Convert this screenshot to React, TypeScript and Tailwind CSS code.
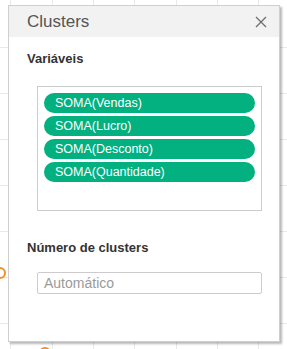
import React from "react";

const pills = ["SOMA(Vendas)", "SOMA(Lucro)", "SOMA(Desconto)", "SOMA(Quantidade)"];

function Background() {
  const hs = [47, 93, 139, 185, 231, 277, 323];
  const vs = [10, 52, 93, 134, 176, 217, 258];
  return (
    <svg className="absolute inset-0" width="287" height="349" viewBox="0 0 287 349">
      {hs.map((y) => (
        <line key={"h" + y} x1="0" x2="287" y1={y + 0.5} y2={y + 0.5} stroke="#e9e9e9" strokeWidth="1" />
      ))}
      {vs.map((x) => (
        <line key={"v" + x} y1="0" y2="349" x1={x + 0.5} x2={x + 0.5} stroke="#e9e9e9" strokeWidth="1" />
      ))}
      <circle cx="0" cy="273" r="5" fill="none" stroke="#f28e2b" strokeWidth="2" />
      <circle cx="45" cy="353" r="5" fill="none" stroke="#f28e2b" strokeWidth="2" />
    </svg>
  );
}

export default function App() {
  return (
    <div
      className="relative w-[287px] h-[349px] overflow-hidden bg-white"
      style={{ fontFamily: '"Liberation Sans", Arial, sans-serif' }}
    >
      <Background />
      <div className="absolute left-[8px] top-[5px] w-[272px] h-[337px] bg-white border border-[#cfcfcf] shadow-[2px_2px_2px_rgba(0,0,0,0.28)] flex flex-col">
        <div className="h-[31px] bg-[#f2f2f2] flex items-center justify-between pl-[18px] pr-[12px] shrink-0">
          <span className="text-[17px] leading-none text-[#555555]">Clusters</span>
          <svg width="12" height="12" viewBox="0 0 12 12">
            <path d="M1 1 L11 11 M11 1 L1 11" stroke="#6e6e6e" strokeWidth="1.3" fill="none" />
          </svg>
        </div>
        <div className="flex flex-col pl-[18px]">
          <div className="mt-[14px] text-[13px] leading-[16px] font-bold text-[#333333]">Variáveis</div>
          <div className="mt-[19px] ml-[10px] w-[225px] h-[125px] border border-[#cccccc] p-[6px] flex flex-col gap-[3px]">
            {pills.map((p) => (
              <div
                key={p}
                className="h-[20px] rounded-full bg-[#03b07f] text-white text-[12.5px] leading-[20px] pl-[11px]"
              >
                {p}
              </div>
            ))}
          </div>
          <div className="mt-[29px] text-[13px] leading-[16px] font-bold text-[#333333]">Número de clusters</div>
          <div className="mt-[16px] ml-[10px] w-[225px] h-[22px] border border-[#cccccc] rounded-[2px] flex items-center pl-[6px]">
            <span className="text-[14px] leading-none text-[#9a9a9a]">Automático</span>
          </div>
        </div>
      </div>
    </div>
  );
}
